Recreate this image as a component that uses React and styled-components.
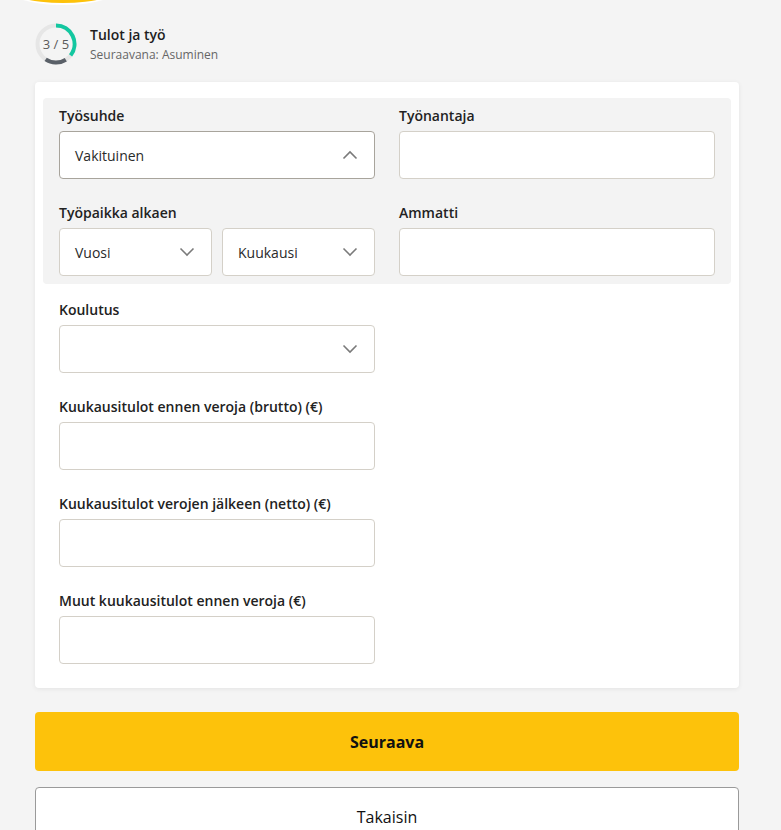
import React from "react";
import styled, { createGlobalStyle } from "styled-components";

const Global = createGlobalStyle`
  html, body { margin: 0; padding: 0; background: #f4f4f4; }
  body { font-family: "Open Sans", "Noto Sans", sans-serif; color: #222; }
  * { box-sizing: border-box; }
`;

const Page = styled.div`
  position: relative;
  width: 781px;
  min-height: 830px;
  padding: 23px 42px 0 35px;
  overflow: hidden;
`;

const TopBlob = styled.div`
  position: absolute;
  top: -31px;
  left: 5px;
  width: 116px;
  height: 36px;
  border-radius: 50%;
  background: #fdc20b;
  border-bottom: 2px solid #fff;
`;

const Header = styled.div`
  display: flex;
  align-items: center;
  gap: 13px;
  margin-bottom: 17px;
`;

const Ring = styled.div`
  position: relative;
  width: 42px;
  height: 42px;
  flex: none;
  svg { display: block; }
`;

const RingText = styled.span`
  position: absolute;
  inset: 0;
  display: flex;
  align-items: center;
  justify-content: center;
  font-size: 13px;
  color: #5a5a5a;
`;

const HeaderText = styled.div`
  display: flex;
  flex-direction: column;
  gap: 4px;
`;

const Title = styled.div`
  font-size: 14px;
  font-weight: 600;
  color: #1e1e1e;
  line-height: 17px;
`;

const Subtitle = styled.div`
  font-size: 12px;
  color: #666;
  line-height: 15px;
`;

const Card = styled.div`
  background: #fff;
  border-radius: 4px;
  box-shadow: 0 1px 5px rgba(0, 0, 0, 0.07);
  padding: 16px 8px 24px;
`;

const Panel = styled.div`
  background: #f3f3f3;
  border-radius: 4px;
  padding: 8px 16px;
`;

const Section = styled.div`
  padding: 16px 16px 0;
  display: flex;
  flex-direction: column;
  gap: 24px;
`;

const Grid = styled.div`
  display: grid;
  grid-template-columns: 316px 316px;
  column-gap: 24px;
  row-gap: 24px;
`;

const Field = styled.div`
  display: flex;
  flex-direction: column;
  width: 316px;
`;

const Label = styled.label`
  font-size: 14px;
  font-weight: 600;
  line-height: 20px;
  color: #222;
  margin-bottom: 5px;
`;

const Pair = styled.div`
  display: flex;
  gap: 10px;
`;

const Box = styled.div`
  flex: ${(p) => (p.$grow ? "1 1 0" : "none")};
  min-width: 0;
  height: 48px;
  border: 1px solid #d4d0c8;
  border-radius: 4px;
  background: #fff;
  display: flex;
  align-items: center;
  justify-content: space-between;
  padding: 0 16px 0 15px;
  font-size: 14px;
  color: #2a2a2a;
  border-color: ${(p) => (p.$active ? "#a8a49c" : "#d4d0c8")};
`;

const Button = styled.button`
  display: flex;
  align-items: center;
  justify-content: center;
  width: 704px;
  height: 59px;
  border-radius: 4px;
  font-family: inherit;
  font-size: 16px;
  cursor: pointer;
  background: ${(p) => (p.$primary ? "#fdc20b" : "#fff")};
  border: ${(p) => (p.$primary ? "none" : "1px solid #9a9a9a")};
  font-weight: ${(p) => (p.$primary ? 700 : 400)};
  color: #111;
  margin-top: ${(p) => (p.$primary ? "24px" : "16px")};
`;

const Chevron = ({ up }) => (
  <svg width="16" height="10" viewBox="0 0 16 10" fill="none">
    <path
      d={up ? "M1.5 8.5 L8 2 L14.5 8.5" : "M1.5 1.5 L8 8 L14.5 1.5"}
      stroke="#7a7a7a"
      strokeWidth="1.6"
    />
  </svg>
);

const Select = ({ value, up, active, grow }) => (
  <Box $active={active} $grow={grow}>
    <span>{value}</span>
    <Chevron up={up} />
  </Box>
);

const arc = (cx, cy, r, a0, a1) => {
  const rad = (a) => ((a - 90) * Math.PI) / 180;
  const x0 = cx + r * Math.cos(rad(a0));
  const y0 = cy + r * Math.sin(rad(a0));
  const x1 = cx + r * Math.cos(rad(a1));
  const y1 = cy + r * Math.sin(rad(a1));
  const large = a1 - a0 > 180 ? 1 : 0;
  return `M${x0} ${y0} A${r} ${r} 0 ${large} 1 ${x1} ${y1}`;
};

export default function App() {
  return (
    <>
      <Global />
      <Page>
        <TopBlob />
        <Header>
          <Ring>
            <svg width="42" height="42" viewBox="0 0 42 42">
              <circle cx="21" cy="21" r="18.5" fill="none" stroke="#e6e6e6" strokeWidth="4" />
              <path d={arc(21, 21, 18.5, 0, 128)} fill="none" stroke="#13c7a0" strokeWidth="4" />
              <path d={arc(21, 21, 18.5, 148, 214)} fill="none" stroke="#5a6068" strokeWidth="4" />
            </svg>
            <RingText>3 / 5</RingText>
          </Ring>
          <HeaderText>
            <Title>Tulot ja työ</Title>
            <Subtitle>Seuraavana: Asuminen</Subtitle>
          </HeaderText>
        </Header>

        <Card>
          <Panel>
            <Grid>
              <Field>
                <Label>Työsuhde</Label>
                <Select value="Vakituinen" up active />
              </Field>
              <Field>
                <Label>Työnantaja</Label>
                <Box />
              </Field>
              <Field>
                <Label>Työpaikka alkaen</Label>
                <Pair>
                  <Select value="Vuosi" grow />
                  <Select value="Kuukausi" grow />
                </Pair>
              </Field>
              <Field>
                <Label>Ammatti</Label>
                <Box />
              </Field>
            </Grid>
          </Panel>
          <Section>
            <Field>
              <Label>Koulutus</Label>
              <Select value="" />
            </Field>
            <Field>
              <Label>Kuukausitulot ennen veroja (brutto) (€)</Label>
              <Box />
            </Field>
            <Field>
              <Label>Kuukausitulot verojen jälkeen (netto) (€)</Label>
              <Box />
            </Field>
            <Field>
              <Label>Muut kuukausitulot ennen veroja (€)</Label>
              <Box />
            </Field>
          </Section>
        </Card>

        <Button $primary>Seuraava</Button>
        <Button>Takaisin</Button>
      </Page>
    </>
  );
}
